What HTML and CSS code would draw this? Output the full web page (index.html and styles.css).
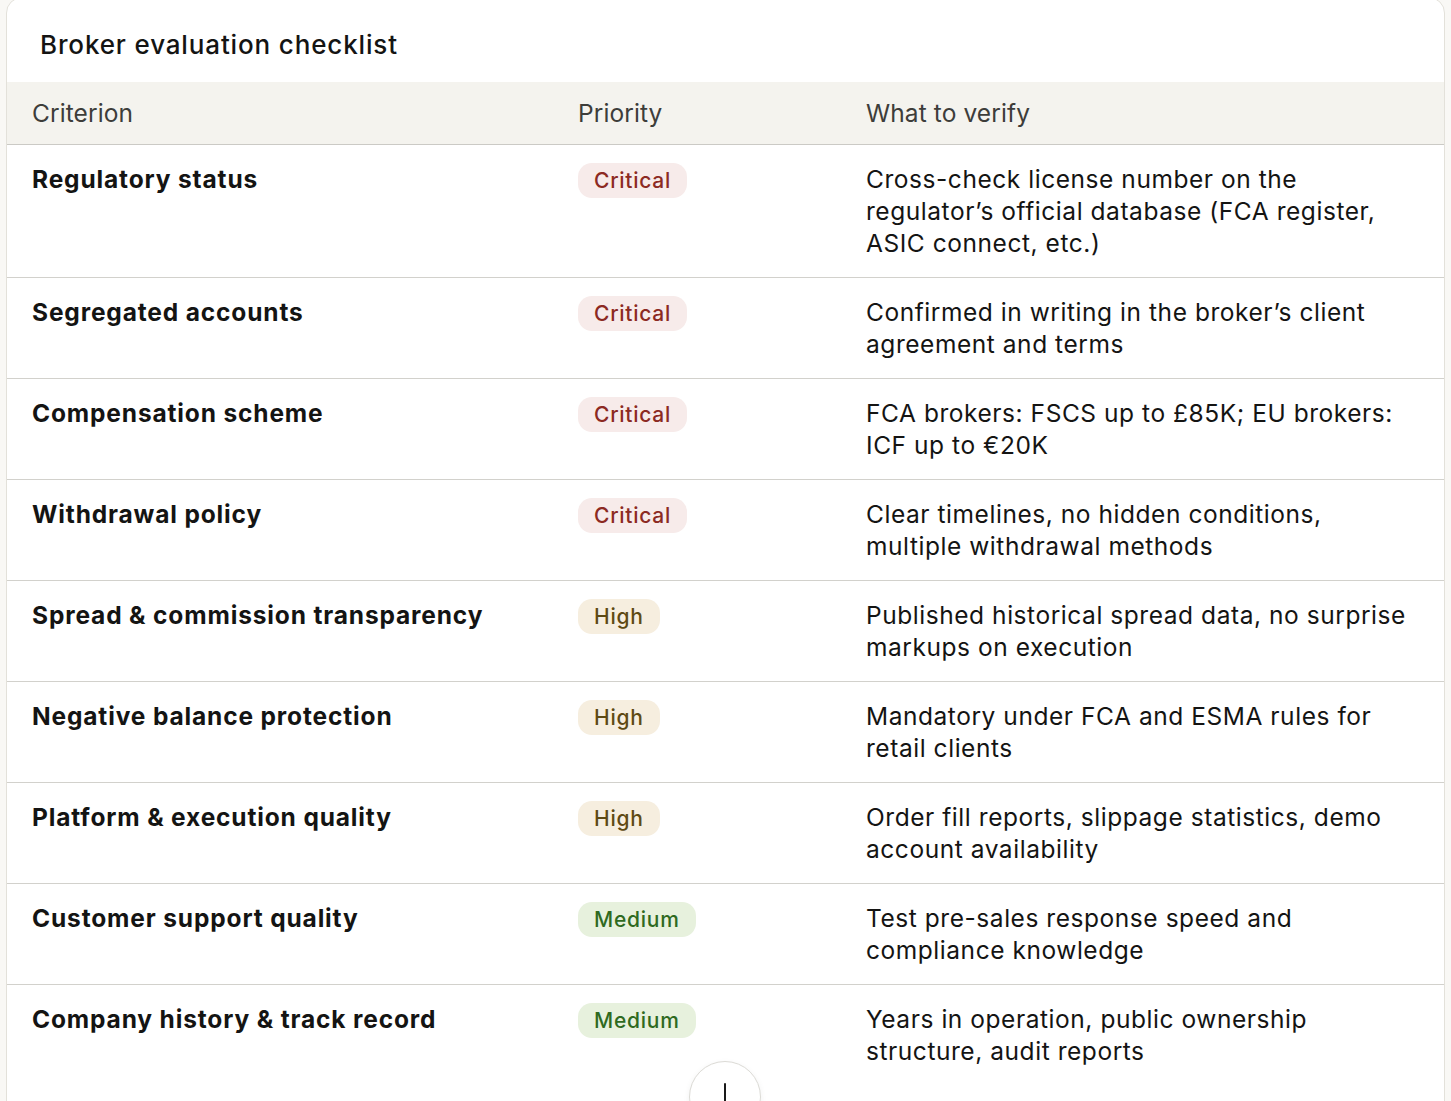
FILE: index.html
```html
<!DOCTYPE html>
<html lang="en">
<head>
<meta charset="utf-8">
<title>Broker evaluation checklist</title>
<link rel="stylesheet" href="styles.css">
</head>
<body>
<div class="page">
  <section class="card">
    <h2 class="title">Broker evaluation checklist</h2>
    <div class="table">
      <div class="row head">
        <div class="cell">Criterion</div>
        <div class="cell">Priority</div>
        <div class="cell">What to verify</div>
      </div>
      <div class="row">
        <div class="cell crit">Regulatory status</div>
        <div class="cell"><span class="badge critical">Critical</span></div>
        <div class="cell verify">Cross-check license number on the regulator’s official database (FCA register, ASIC connect, etc.)</div>
      </div>
      <div class="row">
        <div class="cell crit">Segregated accounts</div>
        <div class="cell"><span class="badge critical">Critical</span></div>
        <div class="cell verify">Confirmed in writing in the broker’s client agreement and terms</div>
      </div>
      <div class="row">
        <div class="cell crit">Compensation scheme</div>
        <div class="cell"><span class="badge critical">Critical</span></div>
        <div class="cell verify">FCA brokers: FSCS up to £85K; EU brokers: ICF up to €20K</div>
      </div>
      <div class="row">
        <div class="cell crit">Withdrawal policy</div>
        <div class="cell"><span class="badge critical">Critical</span></div>
        <div class="cell verify">Clear timelines, no hidden conditions, multiple withdrawal methods</div>
      </div>
      <div class="row">
        <div class="cell crit">Spread &amp; commission transparency</div>
        <div class="cell"><span class="badge high">High</span></div>
        <div class="cell verify">Published historical spread data, no surprise markups on execution</div>
      </div>
      <div class="row">
        <div class="cell crit">Negative balance protection</div>
        <div class="cell"><span class="badge high">High</span></div>
        <div class="cell verify">Mandatory under FCA and ESMA rules for retail clients</div>
      </div>
      <div class="row">
        <div class="cell crit">Platform &amp; execution quality</div>
        <div class="cell"><span class="badge high">High</span></div>
        <div class="cell verify">Order fill reports, slippage statistics, demo account availability</div>
      </div>
      <div class="row">
        <div class="cell crit">Customer support quality</div>
        <div class="cell"><span class="badge medium">Medium</span></div>
        <div class="cell verify">Test pre-sales response speed and compliance knowledge</div>
      </div>
      <div class="row">
        <div class="cell crit">Company history &amp; track record</div>
        <div class="cell"><span class="badge medium">Medium</span></div>
        <div class="cell verify">Years in operation, public ownership structure, audit reports</div>
      </div>
    </div>
  </section>
  <button class="scroll-btn" aria-label="Scroll down">
    <svg width="24" height="32" viewBox="0 0 24 32" fill="none" stroke="#1a1a1a" stroke-width="2" stroke-linecap="round" stroke-linejoin="round"><path d="M12 1v28"/><path d="M5 22l7 7 7-7"/></svg>
  </button>
</div>
</body>
</html>
```
FILE: styles.css
```css
* { box-sizing: border-box; }
html, body { margin: 0; padding: 0; }
body {
  background: #f9f8f5;
  font-family: Inter, "Noto Sans", sans-serif;
  color: #141413;
  overflow: hidden;
  height: 1101px;
}
.page {
  position: relative;
  padding: 0 6px 0 6px;
  height: 1101px;
}
.card {
  margin-top: -3px;
  min-height: 1140px;
  background: #fff;
  border: 1px solid #e3e1da;
  border-radius: 16px;
  overflow: hidden;
}
.title {
  margin: 0;
  padding: 31px 33px 0 33px;
  height: 84px;
  font-size: 26px;
  line-height: 32px;
  font-weight: 500;
  letter-spacing: 0.85px;
  color: #141413;
}
.row {
  display: grid;
  grid-template-columns: 546px 288px 1fr;
  border-bottom: 1px solid #d2d1cc;
}
.row:last-child { border-bottom: none; }
.cell {
  padding: 18px 24px 18px 25px;
  font-size: 24.5px;
  line-height: 32px;
}
.row.head {
  background: #f4f3ee;
  border-bottom: 1px solid #cbcac5;
}
.row.head .cell {
  padding: 15px 24px 15px 25px;
  color: #3d3d3a;
  font-weight: 400;
  letter-spacing: 0.1px;
}
.crit {
  font-weight: 700;
  color: #141413;
  letter-spacing: 0.85px;
}
.verify {
  color: #141413;
  letter-spacing: 0.55px;
  padding-right: 22px;
}
.badge {
  display: inline-block;
  padding: 0 16px;
  height: 35px;
  line-height: 35px;
  border-radius: 14px;
  font-size: 21px;
  font-weight: 500;
  letter-spacing: 0.75px;
  vertical-align: top;
}
.critical { background: #f7ebea; color: #8c2a22; }
.high { background: #f6eedf; color: #5e4a14; }
.medium { background: #e7f1dd; color: #2f6a1f; }
.scroll-btn {
  position: absolute;
  left: 689px;
  top: 1064px;
  width: 72px;
  height: 72px;
  border-radius: 50%;
  border: 1px solid #dcdbd6;
  background: #fff;
  box-shadow: 0 2px 6px rgba(0,0,0,0.06);
  display: flex;
  align-items: flex-start;
  justify-content: center;
  padding: 21px 0 0 0;
}
```
